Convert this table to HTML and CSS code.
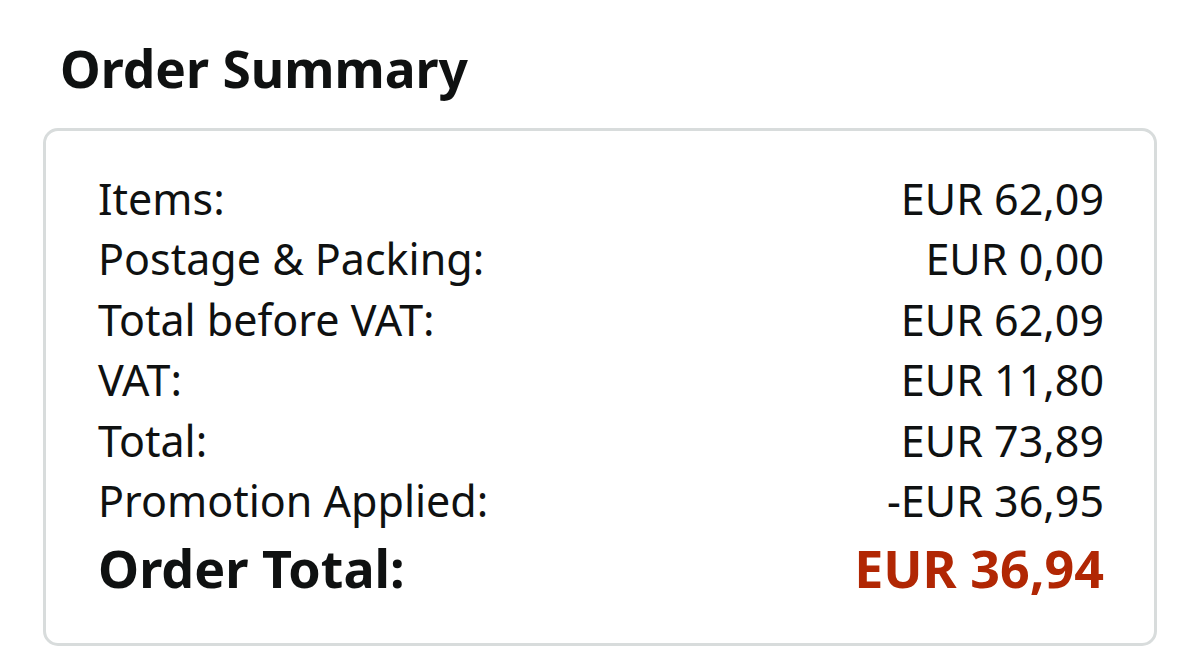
FILE: index.html
```html
<!DOCTYPE html>
<html>
<head>
<meta charset="utf-8">
<link rel="stylesheet" href="styles.css">
</head>
<body>
<div class="page">
  <h1 class="title">Order Summary</h1>
  <div class="card">
    <div class="row"><span>Items:</span><span>EUR 62,09</span></div>
    <div class="row"><span>Postage &amp; Packing:</span><span>EUR 0,00</span></div>
    <div class="row"><span>Total before VAT:</span><span>EUR 62,09</span></div>
    <div class="row"><span>VAT:</span><span>EUR 11,80</span></div>
    <div class="row"><span>Total:</span><span>EUR 73,89</span></div>
    <div class="row"><span>Promotion Applied:</span><span>-EUR 36,95</span></div>
    <div class="row total"><span>Order Total:</span><span class="price">EUR 36,94</span></div>
  </div>
</div>
</body>
</html>
```

FILE: styles.css
```css
html, body {
  margin: 0;
  padding: 0;
  background: #ffffff;
}
body {
  font-family: "Noto Sans", "DejaVu Sans", sans-serif;
  color: #0f1111;
}
.page {
  width: 1200px;
  height: 666px;
  padding: 30px 43px 0 43px;
  box-sizing: border-box;
}
.title {
  margin: 0 0 22px 17px;
  font-size: 51.5px;
  font-weight: 700;
  line-height: 76px;
}
.card {
  border: 3px solid #d8dcdc;
  border-radius: 15px;
  padding: 38px 50px 40px 52px;
}
.row {
  display: flex;
  justify-content: space-between;
  font-size: 43px;
  line-height: 60.4px;
}
.row.total {
  font-size: 52px;
  font-weight: 700;
  line-height: 70px;
  margin-top: 2px;
}
.price {
  color: #b12704;
}
```
